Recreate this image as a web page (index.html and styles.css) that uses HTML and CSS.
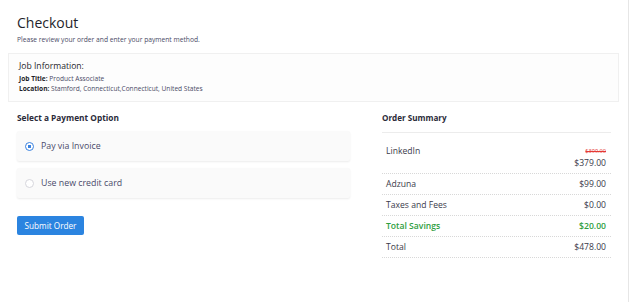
FILE: index.html
```html
<!DOCTYPE html>
<html lang="en">
<head>
  <meta charset="UTF-8">
  <meta name="viewport" content="width=device-width, initial-scale=1.0">
  <title>Checkout</title>
  <link rel="stylesheet" href="styles.css">
</head>
<body>
  <div class="page">

    <!-- Cabeçalho -->
    <div class="header">
      <h1>Checkout</h1>
      <p class="subtitle">Please review your order and enter your payment method.</p>
    </div>

    <!-- Job info -->
    <div class="job-info">
      <h3>Job Information:</h3>
      <p><strong>Job Title:</strong> Product Associate</p>
      <p><strong>Location:</strong> Stamford, Connecticut,Connecticut, United States</p>
    </div>

    <div class="columns">
      <!-- Payment -->
      <div class="payment">
        <h4>Select a Payment Option</h4>
        <label class="option">
          <span class="radio checked"></span>
          Pay via Invoice
        </label>
        <label class="option">
          <span class="radio"></span>
          Use new credit card
        </label>
        <button class="submit-btn">Submit Order</button>
      </div>

      <!-- Order summary -->
      <div class="summary">
        <h4>Order Summary</h4>
        <div class="summary-list">
          <div class="row first">
            <span>LinkedIn</span>
            <span class="price">
              <s class="old">$399.00</s>
              $379.00
            </span>
          </div>
          <div class="row">
            <span>Adzuna</span>
            <span>$99.00</span>
          </div>
          <div class="row">
            <span>Taxes and Fees</span>
            <span>$0.00</span>
          </div>
          <div class="row savings">
            <span>Total Savings</span>
            <span>$20.00</span>
          </div>
          <div class="row">
            <span>Total</span>
            <span>$478.00</span>
          </div>
        </div>
      </div>
    </div>

  </div>
</body>
</html>
```

FILE: styles.css
```css
body {
  margin: 0;
  font-family: "Open Sans", "Noto Sans", sans-serif;
  background: #ffffff;
  color: #2f2f3a;
}
.page {
  min-height: 302px;
  box-sizing: border-box;
  padding: 0 9px 0 8px;
  border-right: 1px solid #e6e6e6;
}
.header {
  padding: 14px 9px 0;
}
h1 {
  margin: 0;
  font-size: 14px;
  font-weight: 500;
  line-height: 18px;
  color: #1f1f2b;
}
.subtitle {
  margin: 3px 0 0;
  font-size: 6.7px;
  line-height: 10px;
  color: #4a4a66;
}
.job-info {
  margin-top: 8px;
  padding: 6px 10px 7px;
  background: #fdfdfd;
  border: 1px solid #f0f0f0;
}
.job-info h3 {
  margin: 0 0 1px;
  font-size: 8.6px;
  font-weight: 500;
  line-height: 13px;
  color: #1f1f2b;
}
.job-info p {
  margin: 0;
  font-size: 6.6px;
  line-height: 10px;
  color: #4a4a66;
}
.job-info strong {
  color: #1f1f2b;
  font-weight: 700;
}
.columns {
  display: flex;
  gap: 32px;
  padding: 10px 0 0 9px;
}
.payment {
  width: 333px;
}
.summary {
  flex: 1;
  margin-right: 8px;
}
h4 {
  margin: 0;
  font-size: 8.3px;
  font-weight: 700;
  line-height: 12px;
  color: #2a2a38;
}
.summary h4 {
  font-size: 8.1px;
}
.option {
  display: flex;
  align-items: center;
  gap: 7px;
  height: 30px;
  box-sizing: border-box;
  padding: 0 8px;
  margin-top: 7px;
  background: #fafafa;
  border-radius: 2px;
  box-shadow: 0 1px 2px rgba(0, 0, 0, 0.08);
  font-size: 8.8px;
  font-weight: 500;
  color: #4a4a6a;
}
.radio {
  width: 7px;
  height: 7px;
  border-radius: 50%;
  border: 1px solid #d6d6dc;
  background: #fff;
  box-sizing: content-box;
}
.radio.checked {
  border-color: #3a82e0;
  background: radial-gradient(circle, #3a82e0 0 1.6px, #fff 2px);
}
.submit-btn {
  margin-top: 18px;
  width: 67px;
  height: 19px;
  padding: 0;
  background: #2b84e0;
  color: #fff;
  border: none;
  border-radius: 2px;
  font-family: inherit;
  font-size: 8.2px;
  font-weight: 500;
  cursor: pointer;
}
.summary-list {
  margin-top: 8px;
  border-top: 1px solid #ececec;
}
.row {
  display: flex;
  justify-content: space-between;
  padding: 5px 5px 5px 4px;
  font-size: 8.6px;
  font-weight: 500;
  line-height: 10px;
  color: #3a3a4a;
  border-bottom: 1px dotted #d8d8d8;
}
.row.first {
  padding-top: 13px;
}
.price {
  display: flex;
  flex-direction: column;
  align-items: flex-end;
  padding-top: 1px;
}
.old {
  font-size: 5.6px;
  line-height: 8px;
  margin-bottom: 3px;
  color: #e53935;
}
.savings {
  color: #2e9e3e;
  font-weight: 600;
}
```
